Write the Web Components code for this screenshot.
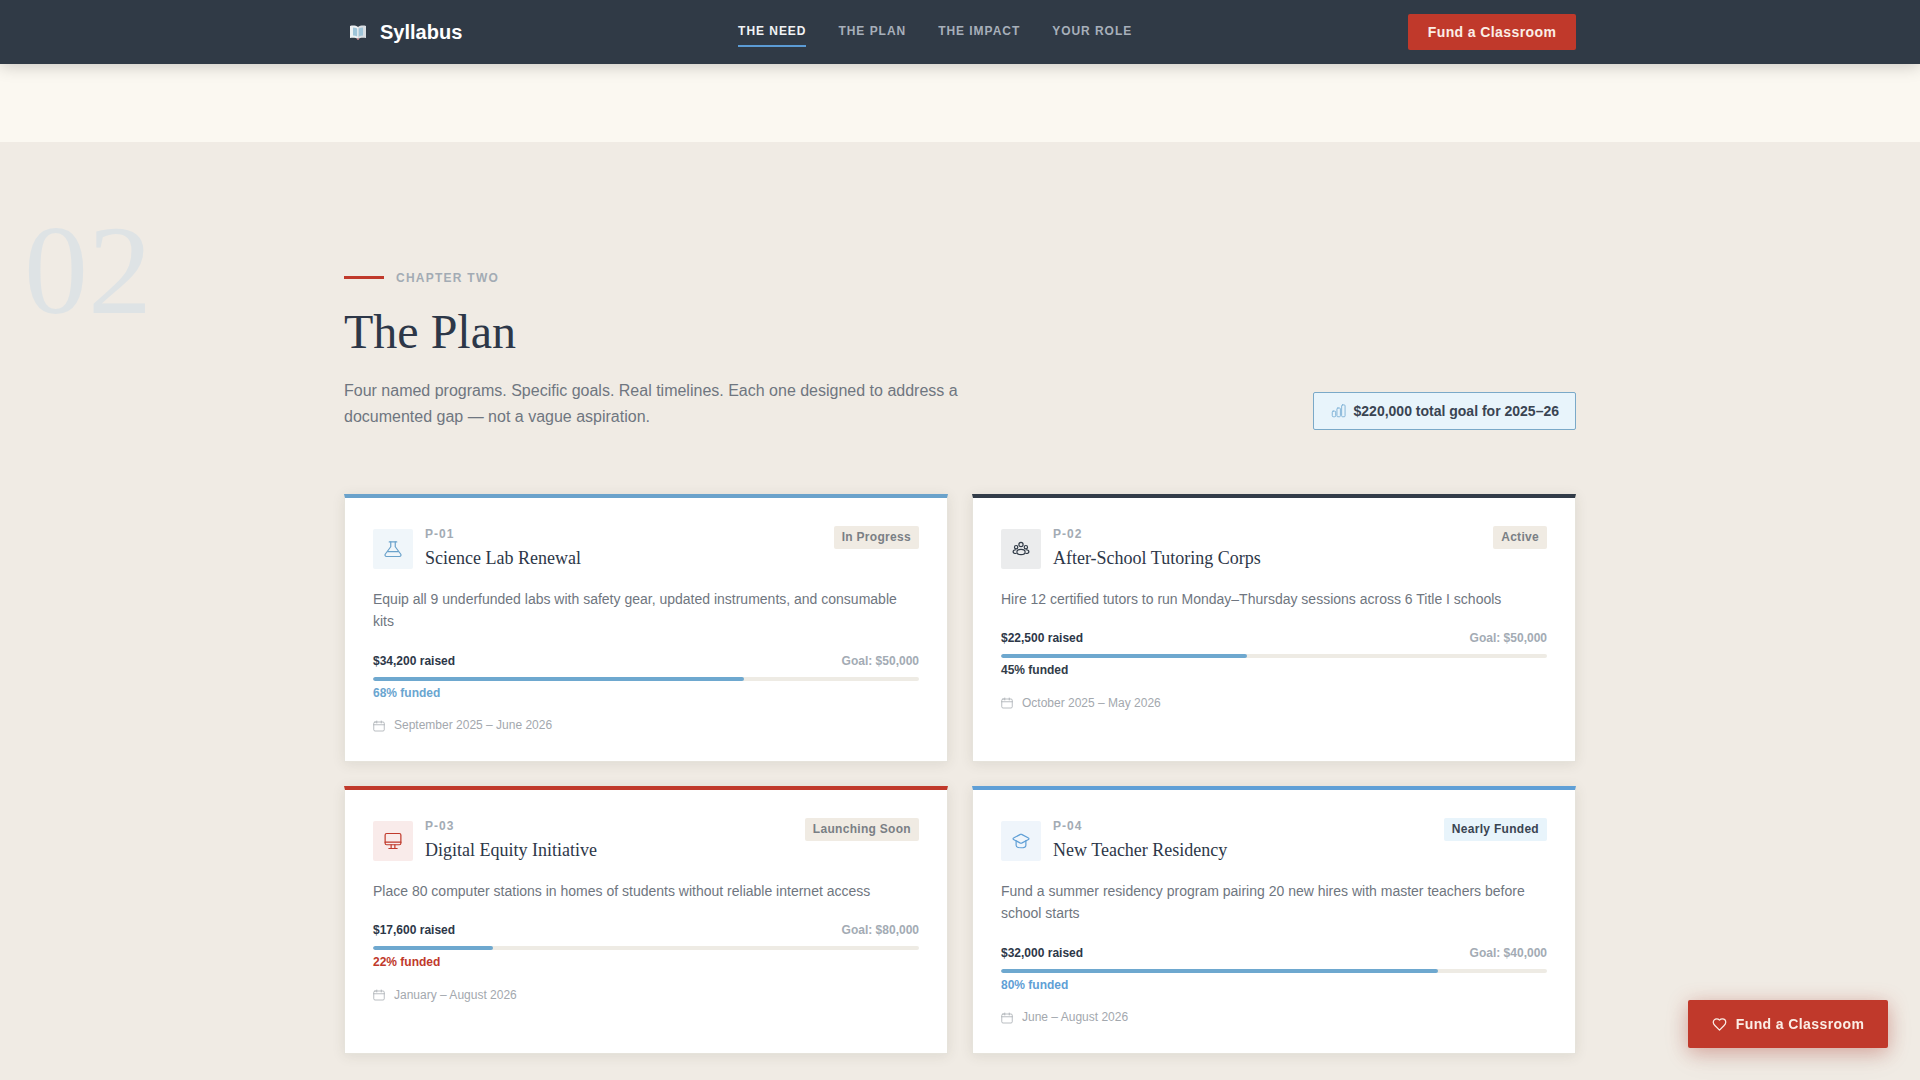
<!DOCTYPE html>
<html lang="en">
<head>
<meta charset="utf-8">
<title>Syllabus</title>
<style>
  html { overflow: hidden; }
  body {
    margin: 0;
    background: #fbf8f1;
    color: #2d3748;
    font-family: "Liberation Sans", Arial, sans-serif;
    line-height: 1.6;
  }
</style>
</head>
<body>
<syllabus-nav></syllabus-nav>
<plan-section>
  <program-card code="P-01" name="Science Lab Renewal" status="In Progress" icon="flask" accent="#6aa2cb"
    raised="$34,200 raised" goal="Goal: $50,000" pct="68" funded-color="#6aa5d0" dates="September 2025 – June 2026">
    Equip all 9 underfunded labs with safety gear, updated instruments, and consumable kits
  </program-card>
  <program-card code="P-02" name="After-School Tutoring Corps" status="Active" icon="people" accent="#323c48"
    raised="$22,500 raised" goal="Goal: $50,000" pct="45" funded-color="#323c48" dates="October 2025 – May 2026">
    Hire 12 certified tutors to run Monday–Thursday sessions across 6 Title I schools
  </program-card>
  <program-card code="P-03" name="Digital Equity Initiative" status="Launching Soon" icon="monitor" accent="#c0392b"
    raised="$17,600 raised" goal="Goal: $80,000" pct="22" funded-color="#c0392b" dates="January – August 2026">
    Place 80 computer stations in homes of students without reliable internet access
  </program-card>
  <program-card code="P-04" name="New Teacher Residency" status="Nearly Funded" status-blue icon="cap" accent="#5f9fd6"
    raised="$32,000 raised" goal="Goal: $40,000" pct="80" funded-color="#5f9fd6" dates="June – August 2026">
    Fund a summer residency program pairing 20 new hires with master teachers before school starts
  </program-card>
</plan-section>
<fund-fab></fund-fab>

<script>
// shared line icons, all on a 24 box
const ICONS = {
  flask: '<path d="M9 2.500v6.500L1.600 19a2 2 0 0 0 1.700 3h17.400a2 2 0 0 0 1.700-3L15 9V2.500"/><path d="M7 2.500h10"/><path d="M5 15.500h14"/>',
  people: '<circle cx="12" cy="6" r="2.800"/><circle cx="5.500" cy="9.500" r="2.200"/><circle cx="18.500" cy="9.500" r="2.200"/><ellipse cx="12" cy="16" rx="5.500" ry="3.500"/><path d="M5 13c-2 .2-3.500 1.300-3.500 2.500S3 18 5.500 18"/><path d="M19 13c2 .2 3.500 1.300 3.500 2.500S21 18 18.500 18"/>',
  monitor: '<rect x="1.500" y="2" width="21" height="15" rx="2"/><path d="M1.500 13.500h21"/><path d="M9.500 17v4.500"/><path d="M14.500 17v4.500"/><path d="M6.500 22h11"/>',
  cap: '<path d="M22 9.900a1 1 0 0 0 0-1.800l-9.200-4.900a2 2 0 0 0-1.600 0L2 8.100a1 1 0 0 0 0 1.800l9.200 4.900a2 2 0 0 0 1.600 0z"/><path d="M5.500 11.500v6a6.500 3.500 0 0 0 13 0v-6"/>',
  calendar: '<rect x="1.500" y="4" width="21" height="18" rx="2.500"/><path d="M1.500 9.500h21"/><path d="M7.500 2v4"/><path d="M16.500 2v4"/>',
  heart: '<path d="M19 14c1.500-1.500 3-3.200 3-5.500A5.500 5.500 0 0 0 16.500 3c-1.800 0-3 .5-4.500 2-1.500-1.500-2.700-2-4.500-2A5.500 5.500 0 0 0 2 8.500c0 2.300 1.500 4 3 5.500l7 7Z"/>',
  bars: '<rect x="2" y="13" width="5.500" height="9" rx="1.500"/><rect x="9.500" y="8" width="5.500" height="14" rx="1.500"/><rect x="17" y="3" width="5.500" height="19" rx="1.500"/>'
};

class LineIcon extends HTMLElement {
  constructor() {
    super();
    this.attachShadow({mode: 'open'});
  }
  connectedCallback() {
    const size = this.getAttribute('size') || 18;
    const weight = this.getAttribute('weight') || 2;
    this.shadowRoot.innerHTML = `
      <style>
        :host { display: inline-flex; flex: none; }
      </style>
      <svg width="${size}" height="${size}" viewBox="0 0 24 24" fill="none" stroke="currentColor"
        stroke-width="${weight}" stroke-linecap="round" stroke-linejoin="round">${ICONS[this.getAttribute('name')]}</svg>`;
  }
}
customElements.define('line-icon', LineIcon);

class SyllabusNav extends HTMLElement {
  constructor() {
    super();
    const shadow = this.attachShadow({mode: 'open'});
    shadow.innerHTML = `
      <style>
        :host {
          display: block;
          position: sticky;
          top: 0;
          z-index: 10;
          background: #303a46;
          box-shadow: 0 2px 16px rgba(0,0,0,.2);
        }
        .inner {
          box-sizing: border-box;
          width: 1232px;
          height: 64px;
          margin: 0 auto;
          display: flex;
          justify-content: space-between;
          align-items: center;
        }
        .brand {
          display: flex;
          align-items: center;
          gap: 13px;
          padding-left: 5px;
          color: #fff;
          font-size: 20px;
          font-weight: 700;
        }
        ul {
          display: flex;
          gap: 32px;
          margin: 0 0 1px;
          padding: 0;
          list-style: none;
        }
        li {
          padding: 6px 0 4px;
          font-size: 12px;
          font-weight: 700;
          letter-spacing: .96px;
          color: #a7afba;
          border-bottom: 2px solid transparent;
          line-height: 19px;
        }
        li.on { color: #f1f3f5; border-bottom-color: #5b9bd5; }
        .cta {
          box-sizing: border-box;
          width: 168px;
          height: 36px;
          background: #c0392b;
          color: #fbeee6;
          font-size: 14px;
          font-weight: 700;
          letter-spacing: .4px;
          display: flex;
          align-items: center;
          justify-content: center;
          border-radius: 2px;
        }
      </style>
      <div class="inner">
        <div class="brand">
          <svg width="18" height="16" viewBox="0 0 18 16">
            <path d="M1 2c3-.8 6-.4 8 1v12c-2-1.300-5-1.700-8-1z" fill="#eef1f3"/>
            <path d="M17 2c-3-.8-6-.4-8 1v12c2-1.300 5-1.700 8-1z" fill="#d8dde2"/>
            <path d="M4 3.500c1.500 0 3 .3 4.200 1v8c-1.200-.7-2.700-1-4.200-1z" fill="#9fc4d8"/>
            <path d="M14 3.500c-1.500 0-3 .3-4.200 1v8c1.200-.7 2.700-1 4.200-1z" fill="#9fc4d8"/>
            <path d="M8 14.300h2v1.500H8z" fill="#c9848a"/>
          </svg>
          <span>Syllabus</span>
        </div>
        <ul>
          <li class="on">THE NEED</li>
          <li>THE PLAN</li>
          <li>THE IMPACT</li>
          <li>YOUR ROLE</li>
        </ul>
        <div class="cta">Fund a Classroom</div>
      </div>`;
  }
}
customElements.define('syllabus-nav', SyllabusNav);

class PlanSection extends HTMLElement {
  constructor() {
    super();
    const shadow = this.attachShadow({mode: 'open'});
    shadow.innerHTML = `
      <style>
        :host {
          display: block;
          position: relative;
          margin-top: 78px;
          padding: 127px 0 96px;
          background: #f0ebe4;
        }
        .ghost {
          position: absolute;
          left: 24px;
          top: 64px;
          font-family: "Liberation Serif", "Times New Roman", serif;
          font-size: 128px;
          line-height: 1;
          color: #dee3e5;
        }
        .wrap { width: 1232px; margin: 0 auto; }
        .chapter {
          display: flex;
          align-items: center;
          gap: 12px;
          font-size: 12px;
          font-weight: 700;
          letter-spacing: 1.250px;
          color: #a3abb4;
        }
        .chapter i { width: 40px; height: 3px; margin-bottom: 2px; background: #c0392b; }
        h2 {
          margin: 15px 0 17px;
          font-family: "Liberation Serif", "Times New Roman", serif;
          font-size: 48px;
          font-weight: 400;
          line-height: 1.2;
          color: #2d3748;
        }
        .lead {
          display: flex;
          justify-content: space-between;
          align-items: flex-end;
          margin-bottom: 64px;
        }
        p {
          margin: 0;
          width: 640px;
          font-size: 16px;
          line-height: 26px;
          color: #6f7680;
        }
        .total {
          box-sizing: border-box;
          height: 38px;
          display: flex;
          align-items: center;
          gap: 8px;
          padding: 0 16px 0 17px;
          background: #e8f4fb;
          border: 1px solid #7aa9c8;
          border-radius: 2px;
          font-size: 14px;
          font-weight: 700;
          color: #3a4452;
        }
        .total line-icon { color: #7fb2d6; }
        .grid {
          display: grid;
          grid-template-columns: 1fr 1fr;
          gap: 24px;
        }
      </style>
      <div class="ghost">02</div>
      <div class="wrap">
        <div class="chapter"><i></i>CHAPTER TWO</div>
        <h2>The Plan</h2>
        <div class="lead">
          <p>Four named programs. Specific goals. Real timelines. Each one designed to address a documented gap — not a vague aspiration.</p>
          <div class="total"><line-icon name="bars" size="15" weight="1.500"></line-icon>$220,000 total goal for 2025–26</div>
        </div>
        <div class="grid"><slot></slot></div>
      </div>`;
  }
}
customElements.define('plan-section', PlanSection);

class ProgramCard extends HTMLElement {
  constructor() {
    super();
    this.attachShadow({mode: 'open'});
  }
  connectedCallback() {
    const a = n => this.getAttribute(n);
    const accent = a('accent');
    this.shadowRoot.innerHTML = `
      <style>
        :host {
          display: block;
          box-sizing: border-box;
          height: 268px;
          padding: 27px 28px 0;
          background: #fff;
          border: 1px solid #e6e3db;
          border-top: 4px solid ${accent};
          box-shadow: 0 2px 12px rgba(60,60,40,.1);
        }
        header {
          display: flex;
          justify-content: space-between;
          align-items: flex-start;
          margin-bottom: 15px;
        }
        .who { display: flex; align-items: center; gap: 12px; }
        .tile {
          width: 40px;
          height: 40px;
          display: flex;
          align-items: center;
          justify-content: center;
          border-radius: 2px;
          color: ${accent};
          background: color-mix(in srgb, ${accent} 10%, #fff);
        }
        .code {
          font-size: 12px;
          font-weight: 700;
          letter-spacing: 1px;
          color: #a3abb4;
        }
        h3 {
          margin: 0;
          font-family: "Liberation Serif", "Times New Roman", serif;
          font-size: 18px;
          font-weight: 400;
          color: #2d3748;
        }
        .status {
          margin-top: 1px;
          padding: 2px 8px;
          border-radius: 2px;
          font-size: 12px;
          font-weight: 700;
          letter-spacing: .3px;
          color: #7a7f85;
          background: #f0ebe3;
        }
        .status.blue { color: #3a4452; background: #e8f4fb; }
        .desc {
          margin-bottom: 19px;
          font-size: 14px;
          line-height: 22.4px;
          color: #6f7680;
        }
        .money {
          display: flex;
          justify-content: space-between;
          font-size: 12px;
          font-weight: 700;
          color: #2d3748;
        }
        .money span:last-child { color: #a3abb4; }
        .track {
          height: 4px;
          margin-top: 6px;
          border-radius: 2px;
          background: #eeebe4;
          overflow: hidden;
        }
        .fill { height: 100%; background: #6ea8cf; border-radius: 2px; }
        .funded {
          margin-top: 3px;
          font-size: 12px;
          font-weight: 700;
          color: ${a('funded-color')};
        }
        .dates {
          display: flex;
          align-items: center;
          gap: 9px;
          margin-top: 13px;
          font-size: 12px;
          color: #a3a8ae;
        }
      </style>
      <header>
        <div class="who">
          <div class="tile"><line-icon name="${a('icon')}" size="18" weight="1.600"></line-icon></div>
          <div>
            <div class="code">${a('code')}</div>
            <h3>${a('name')}</h3>
          </div>
        </div>
        <div class="status${this.hasAttribute('status-blue') ? ' blue' : ''}">${a('status')}</div>
      </header>
      <div class="desc"><slot></slot></div>
      <div class="money"><span>${a('raised')}</span><span>${a('goal')}</span></div>
      <div class="track"><div class="fill" style="width:${a('pct')}%"></div></div>
      <div class="funded">${a('pct')}% funded</div>
      <div class="dates"><line-icon name="calendar" size="12" weight="1.500"></line-icon>${a('dates')}</div>`;
  }
}
customElements.define('program-card', ProgramCard);

class FundFab extends HTMLElement {
  constructor() {
    super();
    const shadow = this.attachShadow({mode: 'open'});
    shadow.innerHTML = `
      <style>
        :host {
          position: fixed;
          right: 32px;
          bottom: 32px;
          z-index: 20;
          box-sizing: border-box;
          width: 200px;
          height: 48px;
          display: flex;
          align-items: center;
          justify-content: center;
          gap: 9px;
          background: #c0392b;
          color: #fbeee6;
          font-size: 14px;
          font-weight: 700;
          letter-spacing: .4px;
          border-radius: 2px;
          box-shadow: 0 4px 20px rgba(192,57,43,.35), 0 8px 30px rgba(0,0,0,.08);
        }
      </style>
      <line-icon name="heart" size="15" weight="2"></line-icon>
      <span>Fund a Classroom</span>`;
  }
}
customElements.define('fund-fab', FundFab);
</script>
</body>
</html>
